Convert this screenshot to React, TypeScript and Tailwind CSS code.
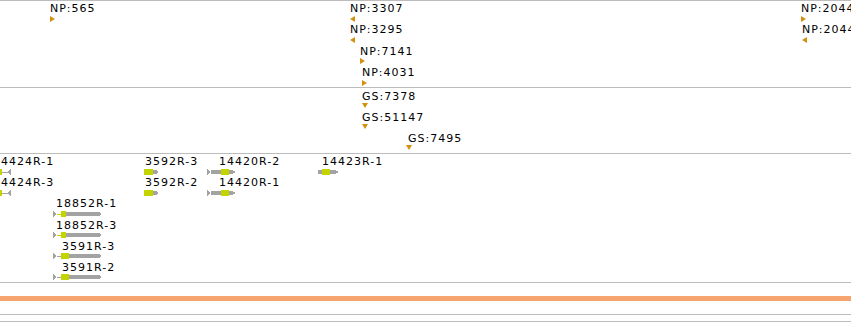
import React from "react";

type Part =
  | { k: "r"; x: number; y: number; w: number; h: number; c: string }
  | { k: "p"; pts: string; c: string };

const GRAY = "#a3a3a3";
const LIME = "#c3d400";
const ORANGE = "#d4900c";

// track tops in page px (the 1px top border sits on this row)
const TRACKS = [
  { top: 0, h: 87 },
  { top: 87, h: 66 },
  { top: 153, h: 129 },
];

type Label = { text: string; x: number; cap: number };
type Arrow = { x: number; y: number; dir: "r" | "l" | "d" };

const np: { label: Label; arrow: Arrow }[] = [
  { label: { text: "NP:565", x: 50, cap: 4 }, arrow: { x: 50, y: 16, dir: "r" } },
  { label: { text: "NP:3307", x: 350, cap: 4 }, arrow: { x: 350, y: 16, dir: "l" } },
  { label: { text: "NP:3295", x: 350, cap: 25.3 }, arrow: { x: 350, y: 37, dir: "l" } },
  { label: { text: "NP:7141", x: 360, cap: 46.7 }, arrow: { x: 360, y: 58, dir: "r" } },
  { label: { text: "NP:4031", x: 362, cap: 68 }, arrow: { x: 362, y: 80, dir: "r" } },
  { label: { text: "NP:20440", x: 801, cap: 4 }, arrow: { x: 801, y: 16, dir: "r" } },
  { label: { text: "NP:20441", x: 802, cap: 25.3 }, arrow: { x: 802, y: 37, dir: "l" } },
];

const gs: { label: Label; arrow: Arrow }[] = [
  { label: { text: "GS:7378", x: 362, cap: 91.7 }, arrow: { x: 362, y: 103, dir: "d" } },
  { label: { text: "GS:51147", x: 362, cap: 112.7 }, arrow: { x: 362, y: 124, dir: "d" } },
  { label: { text: "GS:7495", x: 408, cap: 134 }, arrow: { x: 406, y: 145, dir: "d" } },
];

const row = (i: number) => 157.3 + i * 21.08;

// gene glyph shapes, local coords, 6px tall
const leftTip: Part[] = [
  { k: "r", x: 0, y: 0, w: 2, h: 6, c: LIME },
  { k: "r", x: 2, y: 2.5, w: 6, h: 1, c: GRAY },
  { k: "p", pts: "10,1 7,3 10,5", c: GRAY },
  { k: "r", x: 10, y: 0, w: 1, h: 6, c: GRAY },
];
const short3592: Part[] = [
  { k: "r", x: 0, y: 0, w: 9, h: 6, c: LIME },
  { k: "r", x: 9, y: 1, w: 3, h: 4, c: GRAY },
  { k: "p", pts: "12,1 15,3 12,5", c: GRAY },
];
const g14420: Part[] = [
  { k: "r", x: 0, y: 0, w: 1, h: 6, c: GRAY },
  { k: "p", pts: "1,1 4,3 1,5", c: GRAY },
  { k: "r", x: 4, y: 1, w: 10, h: 4, c: GRAY },
  { k: "r", x: 14, y: 0, w: 8, h: 6, c: LIME },
  { k: "r", x: 22, y: 1, w: 3, h: 4, c: GRAY },
  { k: "p", pts: "25,1 29,3 25,5", c: GRAY },
];
const g14423: Part[] = [
  { k: "r", x: 0, y: 1, w: 4, h: 4, c: GRAY },
  { k: "r", x: 4, y: 0, w: 8, h: 6, c: LIME },
  { k: "r", x: 12, y: 1, w: 5, h: 4, c: GRAY },
  { k: "p", pts: "17,1 21,3 17,5", c: GRAY },
];
const long = (lineC: string, greenW: number): Part[] => [
  { k: "r", x: 0, y: 0, w: 1, h: 6, c: GRAY },
  { k: "p", pts: "1,1 4,3 1,5", c: GRAY },
  { k: "r", x: 4, y: 2.5, w: 4, h: 1, c: lineC },
  { k: "r", x: 8, y: 0, w: greenW, h: 6, c: LIME },
  { k: "r", x: 8 + greenW, y: 1, w: 38 - greenW, h: 4, c: GRAY },
  { k: "p", pts: "46,1 49,3 46,5", c: GRAY },
];

const genes: { label: Label; gx: number; gy: number; parts: Part[] }[] = [
  { label: { text: "4424R-1", x: 1, cap: row(0) }, gx: 0, gy: 169, parts: leftTip },
  { label: { text: "4424R-3", x: 1, cap: row(1) }, gx: 0, gy: 190, parts: leftTip },
  { label: { text: "3592R-3", x: 145, cap: row(0) }, gx: 144, gy: 169, parts: short3592 },
  { label: { text: "3592R-2", x: 145, cap: row(1) }, gx: 144, gy: 190, parts: short3592 },
  { label: { text: "14420R-2", x: 219, cap: row(0) }, gx: 207, gy: 169, parts: g14420 },
  { label: { text: "14420R-1", x: 219, cap: row(1) }, gx: 207, gy: 190, parts: g14420 },
  { label: { text: "14423R-1", x: 322, cap: row(0) }, gx: 318, gy: 169, parts: g14423 },
  { label: { text: "18852R-1", x: 56, cap: row(2) }, gx: 53, gy: 211, parts: long(LIME, 5) },
  { label: { text: "18852R-3", x: 56, cap: row(3) }, gx: 53, gy: 232, parts: long(LIME, 5) },
  { label: { text: "3591R-3", x: 62, cap: row(4) }, gx: 53, gy: 253, parts: long(GRAY, 8) },
  { label: { text: "3591R-2", x: 62, cap: row(5) }, gx: 53, gy: 274, parts: long(GRAY, 8) },
];

function Text({ l, off }: { l: Label; off: number }) {
  return (
    <span
      className="absolute whitespace-nowrap text-[11px] leading-[13px] tracking-[1px] text-black"
      style={{ left: l.x, top: l.cap - 2 - off }}
    >
      {l.text}
    </span>
  );
}

function Tri({ a, off }: { a: Arrow; off: number }) {
  const pts = a.dir === "r" ? "0,0 5,3 0,6" : a.dir === "l" ? "5,0 0,3 5,6" : "0,0 6,0 3,5";
  const w = a.dir === "d" ? 6 : 5;
  const h = a.dir === "d" ? 5 : 6;
  return (
    <svg className="absolute" width={w} height={h} style={{ left: a.x, top: a.y - off }}>
      <polygon points={pts} fill={ORANGE} />
    </svg>
  );
}

function Glyph({ parts, x, y, off }: { parts: Part[]; x: number; y: number; off: number }) {
  return (
    <svg className="absolute" width={50} height={6} style={{ left: x, top: y - off }} shapeRendering="crispEdges">
      {parts.map((p, i) =>
        p.k === "r" ? (
          <rect key={i} x={p.x} y={p.y} width={p.w} height={p.h} fill={p.c} />
        ) : (
          <polygon key={i} points={p.pts} fill={p.c} />
        )
      )}
    </svg>
  );
}

export default function App() {
  const off = TRACKS.map((t) => t.top + 1);
  return (
    <div className="w-[851px] h-[322px] overflow-hidden bg-white font-['DejaVu_Sans',sans-serif]">
      <div className="relative h-[87px] border-t border-[#bcbcbc] overflow-hidden">
        {np.map((f, i) => (
          <React.Fragment key={i}>
            <Text l={f.label} off={off[0]} />
            <Tri a={f.arrow} off={off[0]} />
          </React.Fragment>
        ))}
      </div>
      <div className="relative h-[66px] border-t border-[#bcbcbc] overflow-hidden">
        {gs.map((f, i) => (
          <React.Fragment key={i}>
            <Text l={f.label} off={off[1]} />
            <Tri a={f.arrow} off={off[1]} />
          </React.Fragment>
        ))}
      </div>
      <div className="relative h-[129px] border-t border-[#bcbcbc] overflow-hidden">
        {genes.map((g, i) => (
          <React.Fragment key={i}>
            <Text l={g.label} off={off[2]} />
            <Glyph parts={g.parts} x={g.gx} y={g.gy} off={off[2]} />
          </React.Fragment>
        ))}
      </div>
      <div className="h-[14px] border-t border-[#bcbcbc]" />
      <div className="h-[5px] bg-[#f6a571]" />
      <div className="h-[13px]" />
      <div className="h-[7px] border-t border-[#bcbcbc]" />
      <div className="h-[1px] bg-[#bcbcbc]" />
    </div>
  );
}
